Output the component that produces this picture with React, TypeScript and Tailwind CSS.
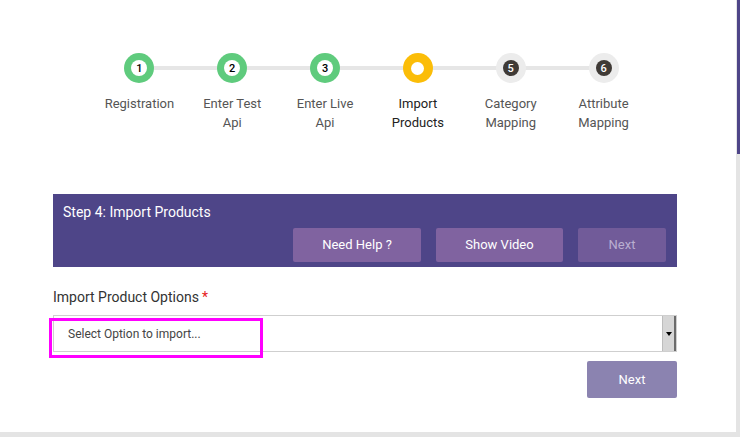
import React from 'react';

type Step = { n: number; label: string[]; state: 'done' | 'active' | 'todo' };

const steps: Step[] = [
  { n: 1, label: ['Registration'], state: 'done' },
  { n: 2, label: ['Enter Test', 'Api'], state: 'done' },
  { n: 3, label: ['Enter Live', 'Api'], state: 'done' },
  { n: 4, label: ['Import', 'Products'], state: 'active' },
  { n: 5, label: ['Category', 'Mapping'], state: 'todo' },
  { n: 6, label: ['Attribute', 'Mapping'], state: 'todo' },
];

const StepDot = ({ step }: { step: Step }) => {
  if (step.state === 'done') {
    return (
      <div className="w-[30px] h-[30px] rounded-full bg-[#5fcb7d] flex items-center justify-center">
        <div className="w-[16px] h-[16px] rounded-full bg-white flex items-center justify-center text-[11px] font-medium text-black leading-none">
          {step.n}
        </div>
      </div>
    );
  }
  if (step.state === 'active') {
    return (
      <div className="w-[30px] h-[30px] rounded-full bg-[#fbbd08] flex items-center justify-center">
        <div className="w-[13px] h-[13px] rounded-full bg-white" />
      </div>
    );
  }
  return (
    <div className="w-[30px] h-[30px] rounded-full bg-[#ececec] flex items-center justify-center">
      <div className="w-[16px] h-[16px] rounded-full bg-[#3f3a36] flex items-center justify-center text-[11px] font-medium text-white leading-none">
        {step.n}
      </div>
    </div>
  );
};

export default function App() {
  return (
    <div className="w-[740px] h-[437px] bg-[#e4e4e4] flex font-['Roboto',sans-serif] overflow-hidden">
      <div className="w-[736px] h-[432px] bg-white flex flex-col">
        {/* wizard steps */}
        <div className="relative mt-[53px] ml-[93px] w-[557px] flex">
          <div className="absolute left-[46px] right-[46px] top-[13px] h-[4px] bg-[#e6e6e6]" />
          {steps.map((s) => (
            <div key={s.n} className="relative w-[93px] flex flex-col items-center">
              <StepDot step={s} />
              <div
                className={`mt-[11px] text-center text-[13px] leading-[19px] ${
                  s.state === 'active' ? 'text-[#222]' : 'text-[#555]'
                }`}
              >
                {s.label.map((l) => (
                  <div key={l}>{l}</div>
                ))}
              </div>
            </div>
          ))}
        </div>

        {/* step header */}
        <div className="mt-[62px] ml-[53px] w-[624px] h-[73px] bg-[#4e4588] px-[10px] pt-[9px] flex flex-col">
          <div className="text-white text-[14px] leading-[18px]">Step 4: Import Products</div>
          <div className="mt-[7px] flex justify-end gap-[15px] pr-[1px]">
            <button className="w-[128px] h-[34px] bg-[#8063a0] text-white text-[13px] rounded-[2px]">Need Help ?</button>
            <button className="w-[127px] h-[34px] bg-[#8063a0] text-white text-[13px] rounded-[2px]">Show Video</button>
            <button className="w-[88px] h-[34px] bg-[#715b99] text-[#b9aed0] text-[13px] rounded-[2px]">Next</button>
          </div>
        </div>

        {/* options */}
        <div className="mt-[21px] ml-[53px] w-[624px]">
          <div className="text-[14px] leading-[18px] text-[#333]">
            Import Product Options<span className="text-[#e62020] ml-[3px]">*</span>
          </div>
          <div className="relative mt-[9px] h-[37px] border border-[#cfcfcf] flex items-center">
            <span className="pl-[14px] text-[12px] text-[#444]">Select Option to import...</span>
            <div className="absolute right-0 top-0 bottom-0 w-[14px] bg-[#d6d6d6] border-l border-[#bdbdbd] border-r-2 border-r-[#6b6b6b] flex items-center justify-center">
              <div className="w-0 h-0 border-l-[3px] border-r-[3px] border-t-[4px] border-l-transparent border-r-transparent border-t-black" />
            </div>
            <div className="absolute left-[-5px] top-[2px] w-[214px] h-[40px] border-[3px] border-[#ff00ff]" />
          </div>
          <div className="flex justify-end mt-[9px]">
            <button className="w-[90px] h-[37px] bg-[#8b83b0] text-white text-[13px] rounded-[2px]">Next</button>
          </div>
        </div>
      </div>

      {/* scrollbar */}
      <div className="w-[4px] h-[437px] flex flex-col">
        <div className="h-[154px] bg-[#4e4588] ml-[1px]" />
      </div>
    </div>
  );
}
